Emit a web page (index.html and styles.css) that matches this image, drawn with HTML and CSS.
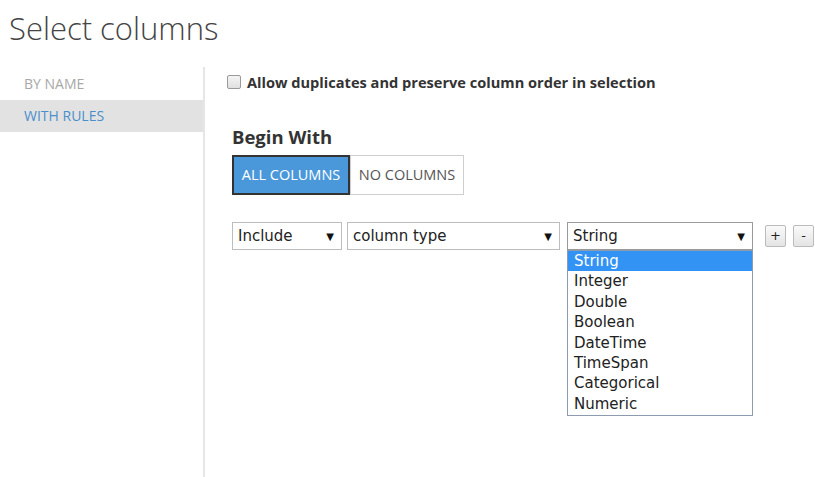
FILE: index.html
```html
<!DOCTYPE html>
<html lang="en">
<head>
<meta charset="utf-8">
<title>Select columns</title>
<link rel="stylesheet" href="styles.css">
</head>
<body>
<h1 class="title">Select columns</h1>
<div class="panel">
  <nav class="side">
    <div class="side-item">BY NAME</div>
    <div class="side-item active">WITH RULES</div>
  </nav>
  <section class="content">
    <label class="dup">
      <span class="box"></span>
      <span>Allow duplicates and preserve column order in selection</span>
    </label>
    <h2 class="begin">Begin With</h2>
    <div class="toggle">
      <span class="tbtn on">ALL COLUMNS</span>
      <span class="tbtn">NO COLUMNS</span>
    </div>
    <div class="rule">
      <div class="sel sel-inc"><span>Include</span><span class="arr">▼</span></div>
      <div class="sel sel-kind"><span>column type</span><span class="arr">▼</span></div>
      <div class="sel-wrap">
        <div class="sel sel-type"><span>String</span><span class="arr">▼</span></div>
        <ul class="list">
          <li class="picked">String</li>
          <li>Integer</li>
          <li>Double</li>
          <li>Boolean</li>
          <li>DateTime</li>
          <li>TimeSpan</li>
          <li>Categorical</li>
          <li>Numeric</li>
        </ul>
      </div>
      <span class="sq">+</span>
      <span class="sq">-</span>
    </div>
  </section>
</div>
</body>
</html>
```
FILE: styles.css
```css
html, body {
  margin: 0;
  padding: 0;
  background: #fff;
  overflow: hidden;
}
body {
  width: 815px;
  height: 477px;
  font-family: "Open Sans", "Noto Sans", sans-serif;
  color: #333;
}
.title {
  margin: 0;
  padding: 8px 0 0 9px;
  height: 59px;
  box-sizing: border-box;
  font-weight: 300;
  font-size: 31px;
  line-height: 40px;
  color: #444;
}
.panel {
  display: flex;
  height: 418px;
}
.side {
  width: 203px;
  border-right: 2px solid #e6e6e6;
  margin-top: 8px;
}
.side-item {
  height: 33px;
  line-height: 33px;
  padding-left: 24px;
  font-size: 14px;
  color: #a8a8a8;
}
.side-item.active {
  background: #e2e2e2;
  color: #4a8fcc;
  height: 32px;
  line-height: 31px;
}
.content {
  padding-left: 22px;
  padding-top: 13px;
  flex: 1;
}
.dup {
  display: flex;
  align-items: center;
  gap: 6px;
  font-weight: 700;
  font-size: 14.6px;
  color: #333;
  height: 20px;
}
.box {
  width: 12px;
  height: 12px;
  border: 1px solid #9a9a9a;
  border-radius: 2px;
  background: linear-gradient(#f4f4f4, #e0e0e0);
}
.begin {
  margin: 33px 0 0 5px;
  font-size: 18.5px;
  font-weight: 700;
  line-height: 23px;
  color: #333;
}
.toggle {
  display: flex;
  margin: 7px 0 0 5px;
}
.tbtn {
  height: 40px;
  box-sizing: border-box;
  width: 114px;
  text-align: center;
  line-height: 38px;
  font-size: 14.5px;
  border: 1px solid #cfcfcf;
  color: #555;
  background: #fff;
}
.tbtn.on {
  background: #4a98da;
  color: #fff;
  border: 2px solid #333;
  line-height: 36px;
  width: 118px;
}
.rule {
  display: flex;
  align-items: flex-start;
  margin: 27px 0 0 5px;
  font-family: "DejaVu Sans", Verdana, sans-serif;
  font-size: 15px;
  color: #222;
}
.sel {
  display: flex;
  justify-content: space-between;
  align-items: center;
  height: 28px;
  box-sizing: border-box;
  border: 1px solid #bdbdbd;
  padding: 0 7px 0 5px;
  background: #fff;
}
.arr {
  font-size: 10px;
  color: #111;
}
.sel-inc { width: 110px; }
.sel-kind { width: 213px; margin-left: 5px; }
.sel-wrap {
  position: relative;
  margin-left: 7px;
}
.sel-type { width: 186px; border-color: #9a9a9a; }
.list {
  position: absolute;
  top: 28px;
  left: 0;
  width: 186px;
  box-sizing: border-box;
  margin: 0;
  padding: 0 0 1px;
  list-style: none;
  border: 1px solid #8c9bb0;
  background: #fff;
}
.list li {
  height: 20.4px;
  line-height: 20px;
  padding-left: 6px;
}
.list li.picked {
  background: #3393f5;
  color: #fff;
}
.sq {
  width: 21px;
  height: 22px;
  box-sizing: border-box;
  margin-top: 3px;
  margin-left: 12px;
  border: 1px solid #bbb;
  border-radius: 2px;
  background: linear-gradient(#fafafa, #e4e4e4);
  text-align: center;
  line-height: 19px;
  font-size: 13px;
}
.sq + .sq { margin-left: 7px; }
```
